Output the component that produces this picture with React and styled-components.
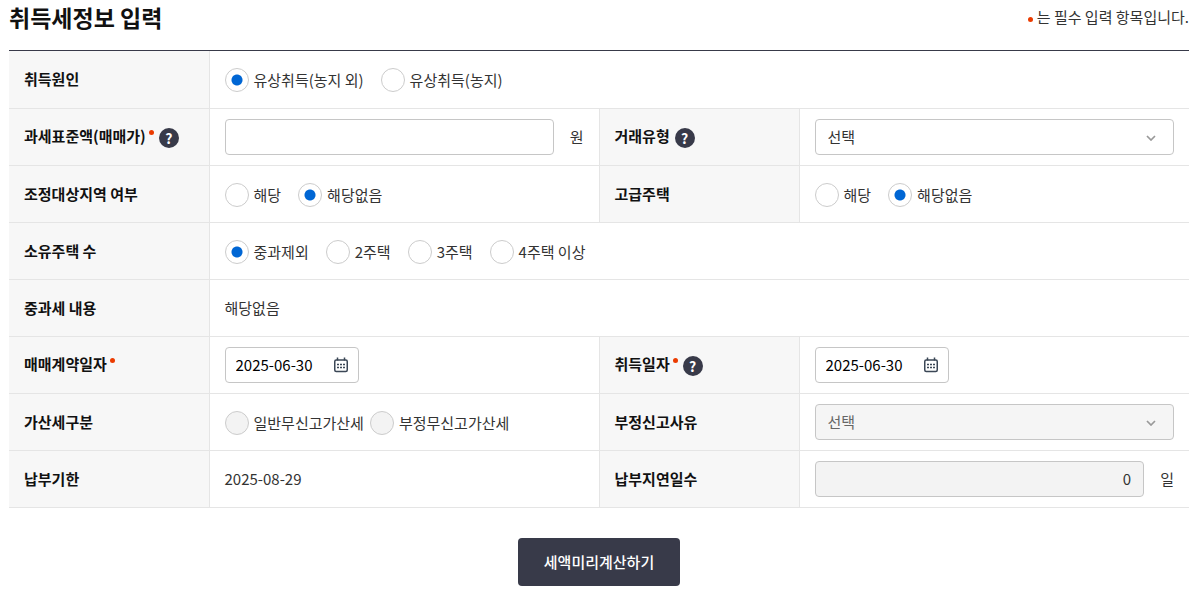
import React, { useState } from 'react';
import styled, { createGlobalStyle } from 'styled-components';

const Chevron = () => (
    <ChevronIcon viewBox="0 0 10 6" aria-hidden="true">
        <path d="M1 1l4 4 4-4" fill="none" stroke="#999" strokeWidth="1.7"/>
    </ChevronIcon>
);

const CalendarIcon = () => (
    <svg width="14" height="16" viewBox="0 0 14 16" aria-hidden="true">
        <rect x="0.75" y="3" width="12.5" height="11.5" rx="1.5" fill="none" stroke="#3b4756" strokeWidth="1.5"/>
        <path d="M3.5 0.5v3M10.5 0.5v3" stroke="#3b4756" strokeWidth="1.5"/>
        <path d="M3 7.5h2M6 7.5h2M9 7.5h2M3 10.5h2M6 10.5h2M9 10.5h2" stroke="#3b4756" strokeWidth="1.6"/>
    </svg>
);

const Help = ({label}) => <HelpButton type="button" aria-label={label}>?</HelpButton>;

const RadioList = ({name, options, initial, label, disabled}) => {
    const [value, setValue] = useState(initial);

    return (
        <RadioGroup role="radiogroup" aria-label={label} $tight={disabled}>
            {options.map((option) => (
                <RadioLabel key={option}>
                    <Radio type="radio" name={name} value={option}
                    checked={value === option} disabled={disabled}
                    onChange={() => setValue(option)}/>
                    {option}
                </RadioLabel>
            ))}
        </RadioGroup>
    );
};

const SelectBox = ({id, disabled}) => (
    <SelectWrap>
        <Select id={id} disabled={disabled}>
            <option>선택</option>
        </Select>
        <Chevron/>
    </SelectWrap>
);

const DateBox = ({id}) => {
    const [date, setDate] = useState('2025-06-30');

    return (
        <DateWrap>
            <DateInput id={id} type="text" value={date} onChange={(e) => setDate(e.target.value)}/>
            <CalendarButton type="button" aria-label="달력">
                <CalendarIcon/>
            </CalendarButton>
        </DateWrap>
    );
};

const App = () => {
    const [price, setPrice] = useState('');

    return (
        <Page>
            <GlobalStyle/>
            <Header>
                <Title>취득세정보 입력</Title>
                <Guide><Dot/>는 필수 입력 항목입니다.</Guide>
            </Header>
            <form onSubmit={(e) => e.preventDefault()}>
                <TableWrap>
                    <Table>
                        <colgroup>
                            <LabelCol/><col/><LabelCol/><col/>
                        </colgroup>
                        <tbody>
                            <tr>
                                <Th scope="row">취득원인</Th>
                                <Td colSpan={3}>
                                    <RadioList name="cause" label="취득원인" initial="유상취득(농지 외)"
                                    options={['유상취득(농지 외)', '유상취득(농지)']}/>
                                </Td>
                            </tr>
                            <tr>
                                <Th scope="row">
                                    <ThInner>
                                        <label htmlFor="price">과세표준액(매매가)</label>
                                        <Dot $raised/>
                                        <Help label="과세표준액 도움말"/>
                                    </ThInner>
                                </Th>
                                <Td>
                                    <Field>
                                        <TextInput id="price" type="text" value={price}
                                        onChange={(e) => setPrice(e.target.value)}/>
                                        <Unit>원</Unit>
                                    </Field>
                                </Td>
                                <Th scope="row">
                                    <ThInner>
                                        <label htmlFor="dealType">거래유형</label>
                                        <Help label="거래유형 도움말"/>
                                    </ThInner>
                                </Th>
                                <Td><SelectBox id="dealType"/></Td>
                            </tr>
                            <tr>
                                <Th scope="row">조정대상지역 여부</Th>
                                <Td>
                                    <RadioList name="area" label="조정대상지역 여부" initial="해당없음"
                                    options={['해당', '해당없음']}/>
                                </Td>
                                <Th scope="row">고급주택</Th>
                                <Td>
                                    <RadioList name="luxury" label="고급주택" initial="해당없음"
                                    options={['해당', '해당없음']}/>
                                </Td>
                            </tr>
                            <tr>
                                <Th scope="row">소유주택 수</Th>
                                <Td colSpan={3}>
                                    <RadioList name="houses" label="소유주택 수" initial="중과제외"
                                    options={['중과제외', '2주택', '3주택', '4주택 이상']}/>
                                </Td>
                            </tr>
                            <tr>
                                <Th scope="row">중과세 내용</Th>
                                <Td colSpan={3}>해당없음</Td>
                            </tr>
                            <tr>
                                <Th scope="row">
                                    <ThInner>
                                        <label htmlFor="contractDate">매매계약일자</label>
                                        <Dot $raised/>
                                    </ThInner>
                                </Th>
                                <Td><DateBox id="contractDate"/></Td>
                                <Th scope="row">
                                    <ThInner>
                                        <label htmlFor="acquireDate">취득일자</label>
                                        <Dot $raised/>
                                        <Help label="취득일자 도움말"/>
                                    </ThInner>
                                </Th>
                                <Td><DateBox id="acquireDate"/></Td>
                            </tr>
                            <tr>
                                <Th scope="row">가산세구분</Th>
                                <Td>
                                    <RadioList name="penalty" label="가산세구분" disabled
                                    options={['일반무신고가산세', '부정무신고가산세']}/>
                                </Td>
                                <Th scope="row"><label htmlFor="reason">부정신고사유</label></Th>
                                <Td><SelectBox id="reason" disabled/></Td>
                            </tr>
                            <tr>
                                <Th scope="row">납부기한</Th>
                                <Td>2025-08-29</Td>
                                <Th scope="row"><label htmlFor="delayDays">납부지연일수</label></Th>
                                <Td>
                                    <Field>
                                        <TextInput id="delayDays" type="text" value="0" disabled/>
                                        <Unit>일</Unit>
                                    </Field>
                                </Td>
                            </tr>
                        </tbody>
                    </Table>
                </TableWrap>
                <Actions>
                    <Submit type="submit">세액미리계산하기</Submit>
                </Actions>
            </form>
        </Page>
    );
};

const GlobalStyle = createGlobalStyle`
    * {
        box-sizing: border-box;
    }
    body {
        margin: 0;
        background: #fff;
    }
    body, input, select, button {
        font-family: "Noto Sans CJK KR", "Noto Sans", sans-serif;
        font-size: 15px;
        color: #333;
    }
`;

const Page = styled.main`
    padding: 0 10px 0 9px;
    line-height: 24px;
`;

const Header = styled.header`
    display: flex;
    justify-content: space-between;
    align-items: flex-start;
    height: 50px;
`;

const Title = styled.h2`
    margin: 0;
    font-size: 23px;
    font-weight: 700;
    line-height: 34px;
    color: #111;
`;

const Guide = styled.p`
    display: flex;
    align-items: center;
    gap: 4px;
    margin: 0;
    line-height: 34px;
`;

const Dot = styled.span`
    flex: none;
    width: 5px;
    height: 5px;
    border-radius: 50%;
    background: #eb3b00;
    margin: ${({$raised}) => ($raised ? '0 0 6px 3px' : '4px 0 0')};
`;

const TableWrap = styled.div`
    border-top: 1px solid #383a49;
`;

const Table = styled.table`
    width: 100%;
    table-layout: fixed;
    border-collapse: collapse;
`;

const LabelCol = styled.col`
    width: 200px;
`;

const Th = styled.th`
    height: 57px;
    padding: 0 15px;
    border-bottom: 1px solid #e5e5e5;
    background: #f7f7f7;
    color: #111;
    font-weight: 700;
    text-align: left;

    td + & {
        border-left: 1px solid #e5e5e5;
    }
`;

const ThInner = styled.div`
    display: flex;
    align-items: center;
    padding-bottom: 2px;
`;

const Td = styled.td`
    height: 57px;
    padding: 0 15px;
    border-bottom: 1px solid #e5e5e5;
    border-left: 1px solid #e5e5e5;
`;

const HelpButton = styled.button`
    width: 20px;
    height: 20px;
    margin: 4px 0 0 5px;
    padding: 0;
    border: none;
    border-radius: 50%;
    background: #383a49;
    color: #fff;
    font-size: 14px;
    font-weight: 700;
    line-height: 20px;
    cursor: pointer;
`;

const RadioGroup = styled.div`
    display: flex;
    gap: ${({$tight}) => ($tight ? '6px' : '17px')};
    padding-top: 2px;
`;

const RadioLabel = styled.label`
    display: flex;
    align-items: center;
    gap: 5px;
`;

const Radio = styled.input`
    appearance: none;
    width: 24px;
    height: 24px;
    margin: 0;
    border: 1px solid #ccc;
    border-radius: 50%;
    background: #fff;

    &:checked {
        background: radial-gradient(circle, #0066d4 5px, #fff 6px);
    }
    &:disabled {
        background: #f3f3f3;
    }
`;

const Field = styled.div`
    display: flex;
    align-items: center;
`;

const TextInput = styled.input`
    flex: 1;
    min-width: 0;
    height: 36px;
    padding: 0 12px;
    border: 1px solid #c6c6c6;
    border-radius: 4px;
    background: #fff;
    text-align: right;

    &:disabled {
        background: #f3f3f3;
        color: #333;
    }
`;

const Unit = styled.span`
    width: 30px;
    text-align: right;
`;

const SelectWrap = styled.div`
    position: relative;
`;

const Select = styled.select`
    appearance: none;
    display: block;
    width: 100%;
    height: 36px;
    padding: 0 36px 0 12px;
    border: 1px solid #c6c6c6;
    border-radius: 4px;
    background: #fff;

    &:disabled {
        background: #f5f5f5;
        color: #666;
        opacity: 1;
    }
`;

const ChevronIcon = styled.svg`
    position: absolute;
    top: 16px;
    right: 18px;
    width: 10px;
    height: 6px;
    pointer-events: none;
`;

const DateWrap = styled.div`
    display: flex;
    align-items: center;
    width: 134px;
    height: 36px;
    padding: 0 10px;
    border: 1px solid #c6c6c6;
    border-radius: 4px;
`;

const DateInput = styled.input`
    flex: 1;
    min-width: 0;
    padding: 0;
    border: none;
    outline: none;
    background: transparent;
    color: #000;
`;

const CalendarButton = styled.button`
    display: flex;
    padding: 0;
    border: none;
    background: transparent;
    cursor: pointer;
`;

const Actions = styled.div`
    display: flex;
    justify-content: center;
    padding-top: 30px;
`;

const Submit = styled.button`
    height: 48px;
    padding: 0 26px;
    border: none;
    border-radius: 4px;
    background: #383a49;
    color: #fff;
    font-weight: 500;
    cursor: pointer;
`;

export default App;
